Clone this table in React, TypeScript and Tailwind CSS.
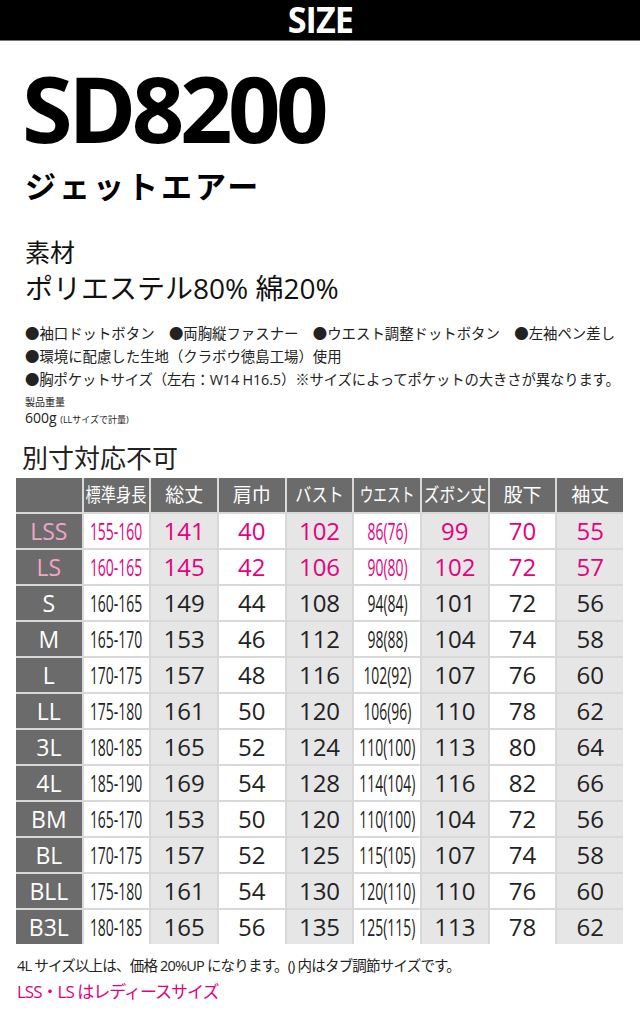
const heads = [
  { label: '', fit: '' },
  { label: '標準身長', fit: 'scale-x-[0.8]' },
  { label: '総丈', fit: '' },
  { label: '肩巾', fit: '' },
  { label: 'バスト', fit: 'scale-x-[0.85]' },
  { label: 'ウエスト', fit: 'scale-x-[0.72]' },
  { label: 'ズボン丈', fit: 'scale-x-[0.82]' },
  { label: '股下', fit: '' },
  { label: '袖丈', fit: '' },
]

const rows = [
  ['LSS', '155-160', '141', '40', '102', '86(76)', '99', '70', '55'],
  ['LS', '160-165', '145', '42', '106', '90(80)', '102', '72', '57'],
  ['S', '160-165', '149', '44', '108', '94(84)', '101', '72', '56'],
  ['M', '165-170', '153', '46', '112', '98(88)', '104', '74', '58'],
  ['L', '170-175', '157', '48', '116', '102(92)', '107', '76', '60'],
  ['LL', '175-180', '161', '50', '120', '106(96)', '110', '78', '62'],
  ['3L', '180-185', '165', '52', '124', '110(100)', '113', '80', '64'],
  ['4L', '185-190', '169', '54', '128', '114(104)', '116', '82', '66'],
  ['BM', '165-170', '153', '50', '120', '110(100)', '104', '72', '56'],
  ['BL', '170-175', '157', '52', '125', '115(105)', '107', '74', '58'],
  ['BLL', '175-180', '161', '54', '130', '120(110)', '110', '76', '60'],
  ['B3L', '180-185', '165', '56', '135', '125(115)', '113', '78', '62'],
]

const font = "font-['Open_Sans','Noto_Sans_CJK_JP',sans-serif]"

function cn(...c: (string | false | undefined)[]) {
  return c.filter(Boolean).join(' ')
}

function Cell({ value, col, ladies }: { value: string; col: number; ladies: boolean }) {
  if (col === 0) {
    return (
      <div className={cn('flex items-center justify-center bg-[#6b6b6b] text-[23px]', ladies ? 'text-[#f4a3c8]' : 'text-white')}>
        {value}
      </div>
    )
  }
  // even columns carry the light grey band
  const shaded = col % 2 === 0
  const narrow = col === 1 || col === 5
  return (
    <div
      className={cn(
        'flex items-center justify-center text-[24px]',
        shaded ? 'bg-[#e6e6e6]' : 'bg-white',
        ladies ? 'text-[#e4007f]' : 'text-[#222]'
      )}
    >
      <span className={cn('inline-block whitespace-nowrap', narrow && 'scale-x-[0.58]')}>{value}</span>
    </div>
  )
}

export default function App() {
  return (
    <div className={`w-[640px] h-[1024px] bg-white overflow-hidden ${font}`}>
      <div className="h-[41px] bg-black border-b border-[#777] flex items-center justify-center">
        <span className="inline-block text-white font-bold text-[36px] leading-none tracking-[-1px] scale-x-[0.95]">SIZE</span>
      </div>

      <div className="px-[25px]">
        <h1 className="mt-[21px] -ml-[3px] text-[92px] font-bold leading-none tracking-[-4.5px] text-black">SD8200</h1>
        <p className="mt-[14px] text-[31px] font-bold leading-[1.2] tracking-[3px] text-black">ジェットエアー</p>

        <p className="mt-[35px] text-[25px] leading-none text-[#111]">素材</p>
        <p className="mt-[9px] text-[28px] leading-none text-[#111]">ポリエステル80% 綿20%</p>

        <div className="mt-[20px] text-[14.4px] leading-[23px] text-[#222] whitespace-nowrap">
          <p>●袖口ドットボタン　●両胸縦ファスナー　●ウエスト調整ドットボタン　●左袖ペン差し</p>
          <p>●環境に配慮した生地（クラボウ徳島工場）使用</p>
          <p className="tracking-[-0.15px]">●胸ポケットサイズ（左右：W14 H16.5）※サイズによってポケットの大きさが異なります。</p>
        </div>
        <p className="mt-[6px] text-[10px] leading-none text-[#222]">製品重量</p>
        <p className="mt-[4px] text-[14px] leading-none text-[#222]">
          600g <span className="text-[9px]">(LLサイズで計量)</span>
        </p>

        <p className="mt-[20px] -ml-[3px] text-[26px] leading-none text-[#222]">別寸対応不可</p>
      </div>

      <div className="ml-[16px] mt-[7px] w-[607px] grid grid-cols-9 gap-[2px] auto-rows-[34px] bg-[#d8d8d8]">
        {heads.map((h, i) => (
          <div key={i} className="flex items-center justify-center bg-[#6b6b6b] text-white text-[19px]">
            <span className={cn('inline-block whitespace-nowrap', h.fit)}>{h.label}</span>
          </div>
        ))}
        {rows.map((r, ri) =>
          r.map((v, ci) => <Cell key={`${ri}-${ci}`} value={v} col={ci} ladies={ri < 2} />)
        )}
      </div>

      <div className="px-[17px] mt-[15px]">
        <p className="text-[14.5px] leading-none tracking-[-0.8px] text-[#222]">
          4L サイズ以上は、価格 20%UP になります。() 内はタブ調節サイズです。
        </p>
        <p className="mt-[9px] text-[17px] leading-none tracking-[-1px] text-[#e4007f]">LSS・LS はレディースサイズ</p>
      </div>
    </div>
  )
}
